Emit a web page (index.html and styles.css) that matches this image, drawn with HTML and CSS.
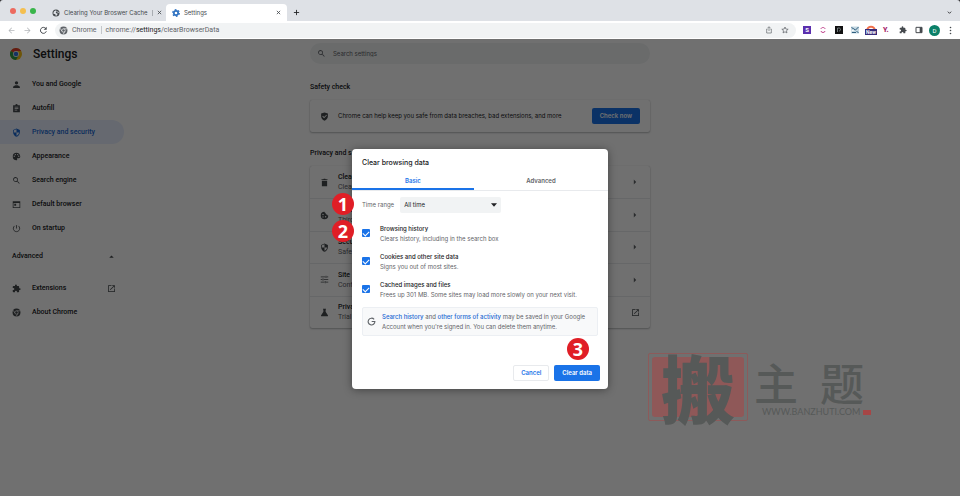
FILE: index.html
```html
<!DOCTYPE html>
<html lang="en">
<head>
<meta charset="utf-8">
<title>Settings</title>
<link rel="stylesheet" href="styles.css">
</head>
<body>
<svg class="defs" aria-hidden="true">
  <symbol id="close" viewBox="0 0 24 24"><path d="M4 4l16 16M20 4L4 20" fill="none" stroke="currentColor" stroke-width="4"/></symbol>
  <symbol id="search" viewBox="0 0 24 24"><path d="M15.5 14h-.8l-.3-.3A6.5 6.5 0 1 0 13.700 14.400l.3.3v.8l5 5 1.500-1.500-5-5zm-6 0a4.500 4.500 0 1 1 0-9 4.500 4.500 0 0 1 0 9z"/></symbol>
  <symbol id="shield" viewBox="0 0 24 24"><path d="M12 1L3 5v6c0 5.550 3.840 10.740 9 12 5.160-1.260 9-6.450 9-12V5l-9-4zm0 11h7c-.53 4.120-3.280 7.790-7 8.940V12H5V6.300l7-3.110V12z"/></symbol>
  <symbol id="puzzle" viewBox="0 0 24 24"><path d="M20.500 11H19V7a2 2 0 0 0-2-2h-4V3.500a2.500 2.500 0 0 0-5 0V5H4a2 2 0 0 0-2 2v3.800h1.500a2.700 2.700 0 0 1 0 5.400H2V20c0 1.100.9 2 2 2h3.800v-1.500a2.700 2.700 0 0 1 5.400 0V22H17a2 2 0 0 0 2-2v-4h1.500a2.500 2.500 0 0 0 0-5z"/></symbol>
  <symbol id="chrome" viewBox="0 0 24 24"><circle cx="12" cy="12" r="10.500"/><g fill="none" stroke="var(--gap, #fff)" stroke-width="1.800"><circle cx="12" cy="12" r="4.500"/><path d="M12 7.500h9.500M8.100 14.250L3.300 6M15.900 14.250L11 22.500"/></g></symbol>
  <symbol id="launch" viewBox="0 0 24 24"><path d="M19 19H5V5h7V3H3v18h18v-9h-2v7zM14 3v2h3.600l-9.800 9.800 1.400 1.400L19 6.400V10h2V3h-7z"/></symbol>
  <symbol id="globe" viewBox="0 0 24 24"><circle cx="12" cy="12" r="10.500"/><path fill="#dee1e6" d="M5 9c3-3 5-5 8-4l1 3-3 2 2 3 4 1-2 5-4 2v-4l-3-2-4-1zM17 6l4 5-3 1-2-3z"/></symbol>
  <symbol id="arrow" viewBox="0 0 24 24"><path d="M20 11H7.800l5.600-5.600L12 4l-8 8 8 8 1.400-1.400L7.800 13H20z"/></symbol>
  <symbol id="caret" viewBox="0 0 10 10"><path d="M3 1l4 4-4 4z"/></symbol>
</svg>

<div class="browser">
  <header class="tabstrip">
    <div class="lights"><i class="red"></i><i class="yellow"></i><i class="green"></i></div>
    <div class="tab">
      <svg class="icon"><use href="#globe"/></svg>
      <span class="tab-title">Clearing Your Broswer Cache</span><span class="tab-bar"></span>
      <button class="plain" aria-label="Close tab"><svg class="x"><use href="#close"/></svg></button>
    </div>
    <div class="tab active">
      <svg class="icon gear" viewBox="0 0 24 24"><circle cx="12" cy="12" r="6.500" fill="none" stroke="currentColor" stroke-width="5"/><circle cx="12" cy="12" r="10" fill="none" stroke="currentColor" stroke-width="3.500" stroke-dasharray="5.240 5.240"/></svg>
      <span class="tab-title">Settings</span>
      <button class="plain" aria-label="Close tab"><svg class="x"><use href="#close"/></svg></button>
    </div>
    <button class="plain new-tab" aria-label="New tab"><svg class="icon" viewBox="0 0 24 24"><path d="M12 3v18M3 12h18" stroke="currentColor" stroke-width="3"/></svg></button>
    <button class="plain tab-search" aria-label="Search tabs"><svg class="x" viewBox="0 0 24 24"><path d="M4 8l8 8 8-8" fill="none" stroke="currentColor" stroke-width="4"/></svg></button>
  </header>

  <div class="toolbar">
    <button class="plain faded" aria-label="Back"><svg class="icon"><use href="#arrow"/></svg></button>
    <button class="plain faded" aria-label="Forward"><svg class="icon flip"><use href="#arrow"/></svg></button>
    <button class="plain" aria-label="Reload"><svg class="icon" viewBox="0 0 24 24"><path d="M19.500 14A8 8 0 1 1 18 6.500" fill="none" stroke="currentColor" stroke-width="2.600"/><path d="M20.500 2v8h-8z"/></svg></button>
    <div class="omnibox">
      <svg class="icon"><use href="#chrome"/></svg>
      <span>Chrome</span><span class="divider"></span>
      <span class="url">chrome://<b>settings</b>/clearBrowserData</span>
      <button class="plain share" aria-label="Share"><svg class="icon" viewBox="0 0 24 24"><path d="M8 9H5v12h14V9h-3M12 15V3M8 6l4-4 4 4" fill="none" stroke="currentColor" stroke-width="2"/></svg></button>
      <button class="plain" aria-label="Bookmark"><svg class="icon" viewBox="0 0 24 24"><path d="M12 3l2.700 6.200 6.800.6-5.200 4.400 1.600 6.600-5.900-3.500-5.900 3.500 1.600-6.600-5.200-4.400 6.800-.6z" fill="none" stroke="currentColor" stroke-width="2.200"/></svg></button>
    </div>
    <div class="extensions">
      <span class="ext violet">S</span>
      <svg class="ext" viewBox="0 0 16 16"><path d="M4 6c0-4 8-4 8 0M4 10c0 4 8 4 8 0" fill="none" stroke="#c2478f" stroke-width="2"/></svg>
      <svg class="ext" viewBox="0 0 16 16"><path fill="#111" d="M0 0h16v16H0z"/><path d="M5 12V4h3c4 0 4 6 0 6" fill="none" stroke="#8f9a9c" stroke-width="1.500"/></svg>
      <svg class="ext" viewBox="0 0 16 16"><path fill="#c5d8e2" d="M0 1h16v14H0z"/><path d="M1 3l8 5 6-6M2 13h8M11 10l4 4" fill="none" stroke="#315f7e" stroke-width="2"/><path d="M1 10l5-2" stroke="#fff" stroke-width="2"/></svg>
      <span class="ext new"><svg viewBox="0 0 24 14"><path d="M3 13a9 9 0 0 1 18 0" fill="none" stroke="#f0714c" stroke-width="5"/></svg><em>New</em></span>
      <span class="ext yoast">Y.</span>
      <svg class="ext dark"><use href="#puzzle"/></svg>
      <svg class="ext dark" viewBox="0 0 24 24"><path d="M3 4h18v16H3z" fill="none" stroke="currentColor" stroke-width="3"/><path d="M14 4h7v16h-7z"/></svg>
      <span class="avatar">D</span>
      <button class="plain" aria-label="Menu"><svg class="icon" viewBox="0 0 24 24"><circle cx="12" cy="4" r="2.200"/><circle cx="12" cy="12" r="2.200"/><circle cx="12" cy="20" r="2.200"/></svg></button>
    </div>
  </div>

  <div class="viewport">
    <div class="settings">
      <div class="side">
        <div class="brand">
          <svg class="logo" viewBox="0 0 24 24"><circle cx="12" cy="12" r="12" fill="#fbc116"/><path fill="#e33b2e" d="M12 12L1.600 6A12 12 0 0 1 22.400 6H12z"/><path fill="#2d9c48" d="M1.600 6A12 12 0 0 0 12 24l5.200-9L12 12z"/><circle cx="12" cy="12" r="5.800" fill="#fff"/><circle cx="12" cy="12" r="4.500" fill="#3474e0"/></svg>
          <h1>Settings</h1>
        </div>
        <nav>
          <a href="#"><svg class="icon" viewBox="0 0 24 24"><path d="M12 12a4.500 4.500 0 1 0 0-9 4.500 4.500 0 0 0 0 9zm0 2c-3 0-9 1.500-9 4.500V21h18v-2.500c0-3-6-4.500-9-4.500z"/></svg>You and Google</a>
          <a href="#"><svg class="icon" viewBox="0 0 24 24"><path fill-rule="evenodd" d="M3 3h6a3 3 0 0 1 6 0h6v19H3zM7 7v2h10V7zM7 11v2h10v-2zM7 15v2h7v-2z"/></svg>Autofill</a>
          <a href="#" class="current"><svg class="icon"><use href="#shield"/></svg>Privacy and security</a>
          <a href="#"><svg class="icon" viewBox="0 0 24 24"><path fill-rule="evenodd" d="M12 2a10 10 0 0 0 0 20c2 0 2.500-1.500 1.600-2.700-.8-1.300 0-2.800 1.500-2.800H18c2.500 0 4-2 4-4.500C22 6 17.500 2 12 2zM6 13a1.700 1.700 0 1 1 0-3.400A1.700 1.700 0 0 1 6 13zm3-4.500A1.700 1.700 0 1 1 9 5a1.700 1.700 0 0 1 0 3.500zm6 0A1.700 1.700 0 1 1 15 5a1.700 1.700 0 0 1 0 3.500zm3 4.500a1.700 1.700 0 1 1 0-3.400A1.700 1.700 0 0 1 18 13z"/></svg>Appearance</a>
          <a href="#"><svg class="icon"><use href="#search"/></svg>Search engine</a>
          <a href="#"><svg class="icon" viewBox="0 0 24 24"><path fill-rule="evenodd" d="M2 3h20v18H2zM4 8v11h16V8zM6 10h5v5H6z"/></svg>Default browser</a>
          <a href="#"><svg class="icon" viewBox="0 0 24 24"><path d="M12 3v9M7 5a8.500 8.500 0 1 0 10 0" fill="none" stroke="currentColor" stroke-width="2.200"/></svg>On startup</a>
          <button class="plain advanced">Advanced<svg class="icon" viewBox="0 0 24 24"><path d="M6 15l6-6 6 6z"/></svg></button>
          <a href="#"><svg class="icon"><use href="#puzzle"/></svg>Extensions<svg class="icon end"><use href="#launch"/></svg></a>
          <a href="#"><svg class="icon"><use href="#chrome"/></svg>About Chrome</a>
        </nav>
      </div>

      <main>
        <label class="search"><svg class="icon"><use href="#search"/></svg><input type="search" placeholder="Search settings" aria-label="Search settings"></label>
        <h2>Safety check</h2>
        <section class="card">
          <div class="row safety">
            <svg class="icon" viewBox="0 0 24 24"><path fill-rule="evenodd" d="M12 1L3 4v8c0 5 4 9.500 9 11 5-1.500 9-6 9-11V4zM6 12l2-2 3 3 6-6 1.500 1.500L11 16.500z"/></svg>
            <p>Chrome can help keep you safe from data breaches, bad extensions, and more</p>
            <button class="primary">Check now</button>
          </div>
        </section>
        <h2>Privacy and s</h2>
        <section class="card list">
          <a class="row" href="#"><svg class="icon" viewBox="0 0 24 24"><path d="M5 7h14v15H5zM4 3h5l1-1h4l1 1h5v2H4z"/></svg><span class="text"><b>Clear</b><small>Clear</small></span><svg class="caret"><use href="#caret"/></svg></a>
          <a class="row" href="#"><svg class="icon" viewBox="0 0 24 24"><path fill-rule="evenodd" d="M12 2a10 10 0 1 0 10 10c-2 0-3-1-3-3-3 0-4-1-4-4-2 0-3-1-3-3zM8 7a2 2 0 1 1 0 4 2 2 0 0 1 0-4zm0 7a1.700 1.700 0 1 1 0 3.400A1.700 1.700 0 0 1 8 14zm7-1a2 2 0 1 1 0 4 2 2 0 0 1 0-4z"/></svg><span class="text"><b>Cook</b><small>Third</small></span><svg class="caret"><use href="#caret"/></svg></a>
          <a class="row" href="#"><svg class="icon"><use href="#shield"/></svg><span class="text"><b>Secu</b><small>Safe</small></span><svg class="caret"><use href="#caret"/></svg></a>
          <a class="row" href="#"><svg class="icon" viewBox="0 0 24 24"><path d="M2 5h12M18 5h4M16 2v6M2 12h4M10 12h12M8 9v6M2 19h10M16 19h6M14 16v6" fill="none" stroke="currentColor" stroke-width="2"/></svg><span class="text"><b>Site</b><small>Cont</small></span><svg class="caret"><use href="#caret"/></svg></a>
          <a class="row" href="#"><svg class="icon" viewBox="0 0 24 24"><path d="M8 2h8v2h-1v6l6 9c1 2 0 3-1 3H4c-1 0-2-1-1-3l6-9V4H8z"/></svg><span class="text"><b>Priva</b><small>Trial</small></span><svg class="icon"><use href="#launch"/></svg></a>
        </section>
      </main>
    </div>

    <div class="backdrop">
      <form class="dialog" role="dialog" aria-labelledby="dialog-title">
        <h2 id="dialog-title">Clear browsing data</h2>
        <div class="tabs" role="tablist">
          <button type="button" role="tab" class="selected" aria-selected="true">Basic</button>
          <button type="button" role="tab" aria-selected="false">Advanced</button>
        </div>
        <div class="body">
          <div class="range">
            <span class="step">1</span>
            <label for="range">Time range</label>
            <span class="select"><select id="range"><option>All time</option></select><svg viewBox="0 0 10 6"><path d="M0 0h10L5 6z"/></svg></span>
          </div>
          <div class="option">
            <span class="step">2</span>
            <input type="checkbox" id="history" checked>
            <label for="history"><b>Browsing history</b>Clears history, including in the search box</label>
          </div>
          <div class="option">
            <input type="checkbox" id="cookies" checked>
            <label for="cookies"><b>Cookies and other site data</b>Signs you out of most sites.</label>
          </div>
          <div class="option">
            <input type="checkbox" id="cache" checked>
            <label for="cache"><b>Cached images and files</b>Frees up 301 MB. Some sites may load more slowly on your next visit.</label>
          </div>
          <div class="notice">
            <svg class="g" viewBox="0 0 24 24"><path d="M19 6.500A9 9 0 1 0 21 12h-8.500" fill="none" stroke="currentColor" stroke-width="3"/></svg>
            <p><a href="#">Search history</a> and <a href="#">other forms of activity</a> may be saved in your Google Account when you're signed in. You can delete them anytime.</p>
          </div>
        </div>
        <div class="actions">
          <button type="button" class="secondary">Cancel</button>
          <button type="button" class="primary">Clear data</button>
          <span class="step">3</span>
        </div>
      </form>
    </div>

    <div class="watermark" lang="zh">
      <div class="seal"><span>搬</span></div>
      <div class="words"><div class="name"><span>主</span><span>题</span></div><span class="site">WWW.BANZHUTI.COM <i></i></span></div>
    </div>
  </div>
</div>
</body>
</html>
```
FILE: styles.css
```css
* { box-sizing: border-box; }
html { background: #2a2a2c; }
body { margin: 0; font: 7px/10px Roboto, sans-serif; color: #202124; }
h1, h2, p { margin: 0; }
b { font-weight: 500; }
a { color: inherit; text-decoration: none; }
button, input, select { font: inherit; color: inherit; border: 0; padding: 0; margin: 0; background: none; }
svg { fill: currentColor; flex: none; display: block; }
.defs { position: absolute; width: 0; height: 0; }
.icon { width: 9px; height: 9px; }
.plain { display: flex; align-items: center; }
.browser { display: flex; flex-direction: column; min-height: 100vh; }

/* Window chrome */
.tabstrip { display: flex; align-items: flex-end; height: 21px; padding-left: 10px; border-radius: 3px 3px 0 0; background: #dee1e6; }
.lights { display: flex; gap: 4px; align-self: center; width: 38px; }
.lights i { width: 6px; height: 6px; border-radius: 50%; }
.red { background: #ed6a5f; }
.yellow { background: #f5bf4f; }
.green { background: #39b54a; }
.tab { display: flex; align-items: center; gap: 4px; width: 118px; height: 17px; padding: 0 4px; color: #45494d; font-family: Inter, sans-serif; font-size: 6px; }
.tab .icon { width: 8px; height: 8px; }
.tab-title { flex: none; }
.tab-bar { width: 1px; height: 6px; background: #a9adb2; }
.tab button { margin-left: auto; }
.x { width: 5px; height: 5px; }
.tab.active { width: 121px; padding: 0 6px; background: #fff; border-radius: 4px 4px 0 0; }
.gear { color: #2a6fc0; }
.new-tab { height: 17px; margin-left: 6px; }
.new-tab .icon { width: 7px; height: 7px; }
.tab-search { height: 17px; margin: 0 8px 0 auto; }
.toolbar { display: flex; align-items: center; gap: 7px; height: 18px; padding: 0 5px 0 7px; background: #fff; color: #45494d; }
.faded { color: #b4b7ba; }
.flip { transform: scaleX(-1); }
.omnibox { --gap: #f1f3f4; display: flex; align-items: center; gap: 4px; flex: 1; height: 15px; padding: 0 3px 0 4px; border-radius: 8px; background: #f1f3f4; color: #5f6368; }
.omnibox b { font-weight: 400; color: #202124; }
.divider { width: 1px; height: 8px; background: #c4c7ca; }
.share { margin-left: auto; }
.omnibox button { margin-right: 4px; }
.omnibox button .icon { width: 8px; height: 8px; }
.extensions { display: flex; align-items: center; gap: 8px; }
.ext { width: 8px; height: 8px; }
.violet { background: #5b2fae; color: #fff; font-weight: 700; font-size: 6px; line-height: 8px; text-align: center; }
.new { position: relative; }
.new svg { width: 10px; height: 6px; margin: -1px; }
.new em { position: absolute; left: -2px; top: 3px; width: 12px; height: 6px; background: #362a78; color: #fff; font-size: 5px; font-weight: 700; font-style: normal; line-height: 6px; text-align: center; }
.yoast { color: #a61e69; font-weight: 900; line-height: 8px; }
.dark { color: #45494d; }
.avatar { width: 11px; height: 11px; margin: 0 -2px; border-radius: 50%; background: #0b8068; color: #fff; font-size: 6px; line-height: 11px; text-align: center; }

/* Settings page */
.viewport { position: relative; flex: 1; background: #fff; }
.settings { display: grid; grid-template-columns: 1fr 340px 1fr; }
.brand { display: flex; align-items: center; gap: 11px; height: 30px; padding-left: 10px; }
.logo { width: 12px; height: 12px; }
h1 { font-size: 12px; line-height: 16px; font-weight: 500; }
nav { display: grid; width: 124px; margin-top: 3px; }
nav a { display: flex; align-items: center; gap: 11px; height: 24px; padding: 0 8px 0 12px; border-radius: 0 12px 12px 0; font-weight: 500; }
nav .icon { color: #45494d; }
nav a.current { background: #e8f0fe; color: #1967d2; }
nav .current .icon { color: inherit; }
.end { margin-left: auto; }
.advanced { justify-content: space-between; height: 24px; margin: 4px 0 8px; padding: 0 8px 0 12px; font-weight: 500; }
main { padding-top: 4px; }
.search { display: flex; align-items: center; gap: 7px; height: 21px; padding: 0 7px; border-radius: 11px; background: #f1f3f4; color: #5f6368; font-family: Inter, sans-serif; font-size: 6px; }
.search input { flex: 1; outline: 0; }
.search input::placeholder { color: #5f6368; opacity: 1; }
h2 { font-size: 7px; font-weight: 500; line-height: 10px; }
main h2 { margin-top: 18px; padding-bottom: 8px; }
main .card + h2 { margin-top: 16px; }
.card { border-radius: 2px; box-shadow: 0 1px 2px #3c404359, 0 0 1px #3c404340; }
.list { display: grid; grid-auto-rows: 1fr; min-height: 162px; }
.row { display: flex; align-items: center; gap: 9px; padding: 0 10px; color: #5f6368; }
.row b, .row p, .row small { display: block; }
.row b, .row p { color: #202124; }
.row small { font-size: inherit; }
.row > .icon { color: #45494d; }
.row .text { margin-right: auto; }
.row + .row { border-top: 1px solid #e8eaed; }
.safety { min-height: 32px; }
.row p { flex: 1; font-family: Inter, sans-serif; font-size: 6px; }
.caret { width: 6px; height: 6px; margin-right: 2px; }
.primary, .secondary { height: 16px; padding: 0 8px; border-radius: 2px; font: 600 6px/10px Inter, sans-serif; }
.primary { background: #1a73e8; color: #fff; }
.secondary { border: 1px solid #e8eaed; color: #1a73e8; }

/* Clear browsing data dialog */
.backdrop { position: absolute; inset: 0; display: flex; align-items: center; justify-content: center; background: rgba(0, 0, 0, .56); }
.dialog { width: 256px; margin-top: 3px; border-radius: 4px; background: #fff; box-shadow: 0 1px 8px #0006; font-family: Inter, sans-serif; font-size: 6px; }
.dialog h2 { padding: 9px 10px 6px; }
.tabs { display: grid; grid-template-columns: 10fr 11fr; border-bottom: 1px solid #e8eaed; }
.tabs button { height: 16px; border-bottom: 2px solid transparent; color: #5f6368; font-weight: 600; }
.tabs .selected { border-color: #1a73e8; color: #1a73e8; }
.body { padding: 5px 10px 0; color: #5f6368; }
.range, .option, .actions { position: relative; }
.range { display: flex; align-items: center; gap: 6px; height: 18px; margin-bottom: 9px; }
.select { position: relative; width: 101px; }
.select select { width: 100%; height: 16px; padding: 0 4px; appearance: none; border-radius: 2px; background: #f1f3f4; color: #202124; }
.select svg { position: absolute; right: 4px; top: 6px; width: 6px; height: 4px; color: #202124; }
.option { display: flex; align-items: center; gap: 10px; height: 28px; padding-bottom: 8px; }
.option label { padding-top: 2px; }
.option b { display: block; color: #202124; }
.option input { display: grid; place-items: center; width: 8px; height: 8px; appearance: none; border-radius: 1px; background: #1a73e8; }
.option input::after { content: ""; width: 5px; height: 3px; margin-bottom: 1px; border: solid #fff; border-width: 0 0 1px 1px; transform: rotate(-45deg); }
.notice { display: flex; align-items: center; gap: 6px; height: 29px; padding: 0 4px; border: 1px solid #eceff3; border-radius: 2px; background: #f8f9fa; }
.g { width: 9px; height: 9px; }
.notice a { color: #1967d2; font-weight: 500; }
.actions { display: flex; justify-content: flex-end; gap: 5px; padding: 29px 8px 8px; }
.secondary { padding: 0 7px; }
.step { position: absolute; left: -30px; top: -3px; width: 22px; height: 22px; border-radius: 50%; background: #e01e26; color: #fff; font: 700 18px/22px "Open Sans", sans-serif; text-align: center; }
.actions .step { left: auto; right: 19px; top: 2px; }

/* Site mark */
.watermark { position: absolute; left: 67.5%; top: 314px; display: flex; color: #565958; font-family: "Noto Sans CJK SC", sans-serif; }
.seal { width: 100px; height: 68px; padding: 3px; border: 1px solid #8d5a5a; border-radius: 2px; }
.seal span { display: block; height: 60px; border-radius: 3px; background: #8f5858; font-size: 74px; font-weight: 900; line-height: 58px; text-align: center; }
.words { display: flex; flex-direction: column; padding: 5px 0 0 6px; }
.name { display: flex; gap: 22px; font-size: 44px; font-weight: 500; line-height: 48px; }
.site { font: 9px/12px Lato, sans-serif; padding-left: 8px; white-space: nowrap; }
.site i { display: inline-block; width: 8px; height: 5px; background: #a64646; }
```
